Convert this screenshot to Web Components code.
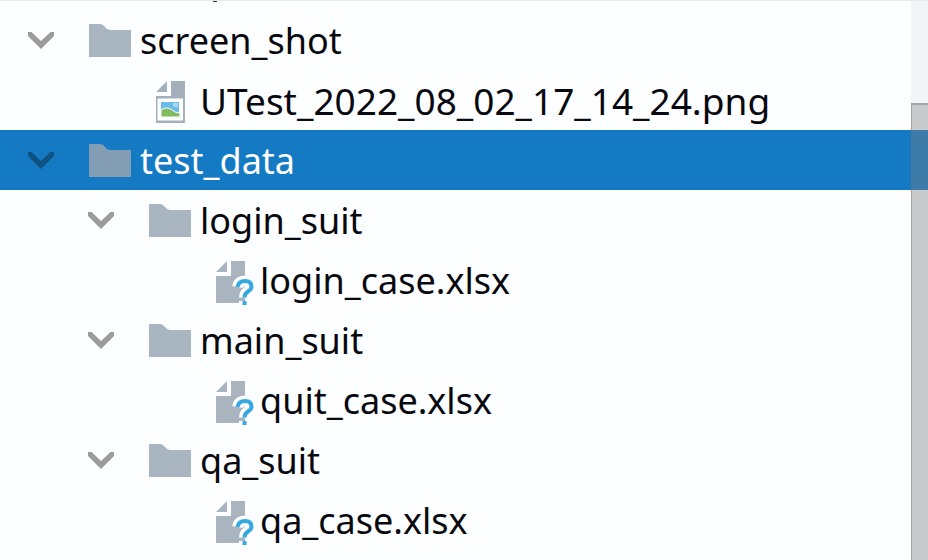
<!DOCTYPE html>
<html lang="en">
<head>
<meta charset="utf-8">
<title>Project</title>
<style>
html, body {
  height: 100%;
}
body {
  margin: 0;
  background: #fdfeff;
  color: #08080f;
  font-family: "Noto Sans", "Open Sans", sans-serif;
  overflow: hidden;
}
</style>
</head>
<body>
<project-panel>
  <tree-view>
    <tree-node kind="folder" level="1">screen_shot</tree-node>
    <tree-node kind="image" level="2">UTest_2022_08_02_17_14_24.png</tree-node>
    <tree-node kind="folder" level="1" selected>test_data</tree-node>
    <tree-node kind="folder" level="2">login_suit</tree-node>
    <tree-node kind="unknown" level="3">login_case.xlsx</tree-node>
    <tree-node kind="folder" level="2">main_suit</tree-node>
    <tree-node kind="unknown" level="3">quit_case.xlsx</tree-node>
    <tree-node kind="folder" level="2">qa_suit</tree-node>
    <tree-node kind="unknown" level="3">qa_case.xlsx</tree-node>
  </tree-view>
  <scroll-bar slot="bar"></scroll-bar>
</project-panel>

<script>
const CHEVRON = '<svg width="28" height="60" viewBox="0 0 28 60" aria-hidden="true"><path d="M1 22h3.5l9.5 9 9.5-9H27v4L14 39 1 26z" fill="currentColor"/></svg>';

const ICONS = {
  folder: '<path d="M3 14h11q3 0 5 3t5 3h21v27H3z" fill="var(--folder)"/>',
  image: `
    <path d="M10 22 21 11v11zM25 11h14v42H10V26h15z" fill="#a3afba"/>
    <path d="M11.5 28.5H37v22H11.5z" fill="#fdfeff"/>
    <path d="M15 32h18v12H15z" fill="#6cbbe8"/>
    <path d="M27 33h5v4q-3 1-5-1z" fill="#a9d8f2"/>
    <path d="M15 40q6-4 11 0 3 3 8 3v4H15z" fill="#82bd62" stroke="#fdfeff"/>`,
  unknown: `
    <path d="M10 22 21 11v11zM25 11h14v42H10V26h15z" fill="#a9b4be"/>
    <g fill="none" stroke-linejoin="round">
      <path d="M31.5 37q1-6 7.500-6 6.500 0 6.500 5.500 0 3-3.500 5-3.500 2-3.500 6M38.500 51v4" stroke="#fdfeff" stroke-width="11"/>
      <path d="M31.5 37q1-6 7.500-6 6.500 0 6.500 5.500 0 3-3.500 5-3.500 2-3.500 6M38.500 51v4" stroke="#36a9e1" stroke-width="4"/>
    </g>`
};

customElements.define("project-panel", class extends HTMLElement {
  constructor() {
    super();
    this.attachShadow({ mode: "open" }).innerHTML = `
      <style>
        :host { display: grid; grid-template-columns: 1fr 17px; min-height: 100%; box-sizing: border-box; border-top: 1px solid #e6e8ea; }
        main { grid-area: 1 / 1 / 2 / 3; min-width: 0; }
        aside { grid-area: 1 / 2 / 2 / 3; display: grid; }
      </style>
      <main><slot></slot></main>
      <aside><slot name="bar"></slot></aside>`;
  }
});

customElements.define("tree-view", class extends HTMLElement {
  constructor() {
    super();
    this.attachShadow({ mode: "open" }).innerHTML = `
      <style>
        :host { display: block; }
        .above { height: 9px; padding-left: 213px; }
        .above i { display: block; width: 4px; height: 1px; background: #3a3a42; }
      </style>
      <div class="above"><i></i></div>
      <div role="tree"><slot></slot></div>`;
  }
});

customElements.define("tree-node", class extends HTMLElement {
  constructor() {
    super();
    this.attachShadow({ mode: "open" });
  }
  connectedCallback() {
    const kind = this.getAttribute("kind");
    const level = Number(this.getAttribute("level"));
    const selected = this.hasAttribute("selected");
    const toggle = kind == "folder" ? `<button type="button" aria-label="Collapse">${CHEVRON}</button>` : "";
    this.setAttribute("role", "treeitem");
    this.setAttribute("aria-level", level);
    this.setAttribute("aria-selected", selected);
    this.shadowRoot.innerHTML = `
      <style>
        :host { display: flex; height: 60px; font-size: 36px; --folder: #a9b5c0; --chevron: #9c9c9c; }
        :host([kind="image"]) { font-size: 37px; }
        :host([selected]) { background: #147ac4; color: #fff; --folder: #829db4; --chevron: #10527f; }
        .indent { flex: none; width: ${(level - 1) * 60}px; }
        .toggle { flex: none; width: 59px; padding-left: 27px; }
        button { display: block; padding: 0; border: 0; background: none; color: var(--chevron); }
        svg { display: block; flex: none; }
        .label { line-height: 62px; white-space: nowrap; padding-left: 6px; }
      </style>
      <span class="indent"></span>
      <span class="toggle">${toggle}</span>
      <svg width="48" height="60" viewBox="0 0 48 60" aria-hidden="true">${ICONS[kind]}</svg>
      <span class="label"><slot></slot></span>`;
  }
});

customElements.define("scroll-bar", class extends HTMLElement {
  constructor() {
    super();
    this.attachShadow({ mode: "open" }).innerHTML = `
      <style>
        :host { display: grid; grid-template-rows: 102px 1fr; }
        .track { background: #f2f4f6; }
        .thumb { background: rgba(122, 124, 128, .4); border: solid rgba(110, 112, 116, .4); border-width: 2px 0 0 1px; }
      </style>
      <div class="track"></div>
      <div class="thumb"></div>`;
  }
});
</script>
</body>
</html>
